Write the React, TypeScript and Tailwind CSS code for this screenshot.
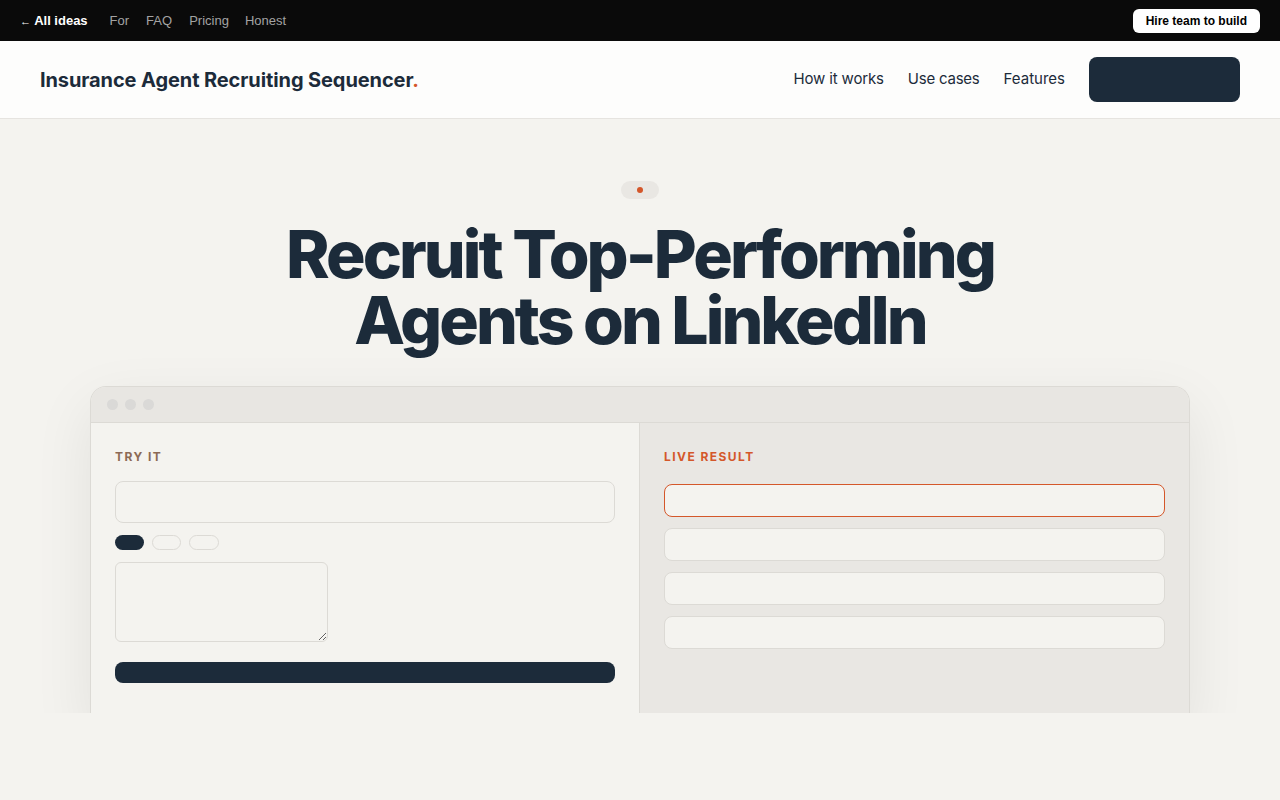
import React from "react";

const sans = { fontFamily: "Inter, 'Noto Sans', sans-serif" };
const arial = { fontFamily: "'Liberation Sans', Arial, sans-serif" };

function TopBar() {
  return (
    <div className="flex h-[41px] items-center justify-between bg-[#0a0a0a] px-5" style={arial}>
      <div className="flex items-center text-[13px]">
        <a className="font-bold text-white">
          <span className="text-[11px] font-normal">←</span> All ideas
        </a>
        <a className="ml-[22px] text-[#a3a3a3]">For</a>
        <a className="ml-[17px] text-[#a3a3a3]">FAQ</a>
        <a className="ml-[17px] text-[#a3a3a3]">Pricing</a>
        <a className="ml-[16px] text-[#a3a3a3]">Honest</a>
      </div>
      <button className="h-6 rounded-md bg-white px-[13px] text-[12px] font-bold text-black">
        Hire team to build
      </button>
    </div>
  );
}

function Header() {
  return (
    <header
      className="flex h-[78px] items-center justify-between border-b border-[#e6e4e0] bg-[#fdfdfc] pl-10 pr-10"
      style={sans}
    >
      <div className="text-[20px] font-bold tracking-[-0.005em] text-[#1c2b3a]">
        Insurance Agent Recruiting Sequencer<span className="text-[#d4572a]">.</span>
      </div>
      <nav className="flex items-center text-[15px] text-[#1c2b3a]">
        <a className="tracking-[-0.01em]">How it works</a>
        <a className="ml-6 tracking-[-0.015em]">Use cases</a>
        <a className="ml-6">Features</a>
        <button className="ml-6 h-[45px] w-[151px] rounded-lg bg-[#1c2b3a]" />
      </nav>
    </header>
  );
}

function Demo() {
  return (
    <div className="mx-auto mt-[33px] w-[1100px] overflow-hidden rounded-t-2xl border border-b-0 border-[#dcdad5] shadow-[0_20px_60px_rgba(0,0,0,0.08)]">
      <div className="flex h-[36px] items-center gap-[7px] border-b border-[#dcdad5] bg-[#e8e6e2] px-4">
        <span className="h-[11px] w-[11px] rounded-full bg-[#dad9d7]" />
        <span className="h-[11px] w-[11px] rounded-full bg-[#dad9d7]" />
        <span className="h-[11px] w-[11px] rounded-full bg-[#dad9d7]" />
      </div>
      <div className="grid h-[300px] grid-cols-2">
        <div className="border-r border-[#dcdad5] bg-[#f4f3ef] px-6 pt-[25px]">
          <div className="text-[12px] font-bold tracking-[0.12em] text-[#8c6a55]" style={sans}>
            TRY IT
          </div>
          <div className="mt-[15px] h-[42px] rounded-lg border border-[#dcdad5] bg-[#f4f3ef]" />
          <div className="mt-[12px] flex gap-2">
            <span className="h-[15px] w-[29px] rounded-full bg-[#1c2b3a]" />
            <span className="h-[15px] w-[29px] rounded-full border border-[#dcdad5]" />
            <span className="h-[15px] w-[30px] rounded-full border border-[#dcdad5]" />
          </div>
          <textarea className="mt-[12px] block h-[80px] w-[213px] rounded-md border border-[#dcdad5] bg-[#f4f3ef]" />
          <div className="mt-[20px] h-[21px] rounded-lg bg-[#1c2b3a]" />
        </div>
        <div className="bg-[#e9e7e3] px-6 pt-[25px]">
          <div className="text-[12px] font-bold tracking-[0.12em] text-[#d4572a]" style={sans}>
            LIVE RESULT
          </div>
          <div className="mt-[18px] flex flex-col gap-[11px]">
            <div className="h-[33px] rounded-lg border border-[#d4572a] bg-[#f4f3ef]" />
            <div className="h-[33px] rounded-lg border border-[#dcdad5] bg-[#f4f3ef]" />
            <div className="h-[33px] rounded-lg border border-[#dcdad5] bg-[#f4f3ef]" />
            <div className="h-[33px] rounded-lg border border-[#dcdad5] bg-[#f4f3ef]" />
          </div>
        </div>
      </div>
    </div>
  );
}

export default function App() {
  return (
    <div className="min-h-[800px] bg-[#f4f3ef]">
      <TopBar />
      <Header />
      <section className="h-[594px] overflow-hidden" style={sans}>
        <div className="flex flex-col items-center pt-[62px]">
          <div className="flex h-[18px] w-[38px] items-center justify-center rounded-full bg-[#e9e7e3]">
            <span className="h-[6px] w-[6px] rounded-full bg-[#d4572a]" />
          </div>
          <h1 className="mt-[22px] text-center text-[66px] font-extrabold leading-[66px] tracking-[-0.045em] text-[#1c2b3a]">
            Recruit Top-Performing
            <br />
            Agents on LinkedIn
          </h1>
          <Demo />
        </div>
      </section>
    </div>
  );
}
